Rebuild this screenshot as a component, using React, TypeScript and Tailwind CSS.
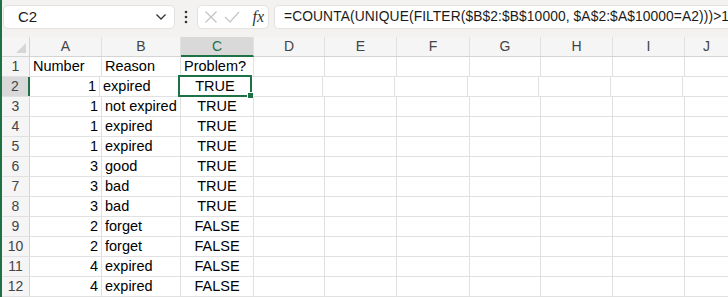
import React from "react";

const rows: [number, string, string][] = [
  [1, "expired", "TRUE"],
  [1, "not expired", "TRUE"],
  [1, "expired", "TRUE"],
  [1, "expired", "TRUE"],
  [3, "good", "TRUE"],
  [3, "bad", "TRUE"],
  [3, "bad", "TRUE"],
  [2, "forget", "FALSE"],
  [2, "forget", "FALSE"],
  [4, "expired", "FALSE"],
  [4, "expired", "FALSE"],
];

const cellFont = { fontFamily: '"Liberation Sans", Arial, sans-serif' };

function EmptyCells() {
  return (
    <>
      <div className="w-[71px] shrink-0 border-r border-[#e1e1e1]" />
      <div className="w-[72px] shrink-0 border-r border-[#e1e1e1]" />
      <div className="w-[73px] shrink-0 border-r border-[#e1e1e1]" />
      <div className="w-[71px] shrink-0 border-r border-[#e1e1e1]" />
      <div className="w-[72px] shrink-0 border-r border-[#e1e1e1]" />
      <div className="w-[72px] shrink-0 border-r border-[#e1e1e1]" />
      <div className="flex-1" />
    </>
  );
}

export default function App() {
  return (
    <div className="w-[728px] h-[297px] overflow-hidden flex bg-white" style={cellFont}>
      <div className="w-[2px] shrink-0 bg-[#1e7145]" />
      <div className="flex-1 flex flex-col min-w-0">
        {/* Formula bar */}
        <div className="h-[37px] shrink-0 bg-[#f3f2f1] flex items-start pt-[5px]">
          <div className="ml-[1px] w-[172px] h-[24px] bg-white border border-[#e3e2e1] rounded-[5px] flex items-center pl-[14px] pr-[6px]">
            <span className="text-[15px] text-[#1b1b1b] flex-1">C2</span>
            <svg width="12" height="8" viewBox="0 0 12 8" className="mr-[1px]">
              <path d="M1.5 1.5 L6 6 L10.5 1.5" fill="none" stroke="#333" strokeWidth="1.3" />
            </svg>
          </div>
          <div className="w-[22px] h-[24px] flex items-center justify-center">
            <svg width="4" height="14" viewBox="0 0 4 14">
              <circle cx="2" cy="2" r="1.3" fill="#333" />
              <circle cx="2" cy="7" r="1.3" fill="#333" />
              <circle cx="2" cy="12" r="1.3" fill="#333" />
            </svg>
          </div>
          <div className="w-[72px] h-[24px] bg-white border border-[#e3e2e1] rounded-[5px] flex items-center pl-[6px] pr-[4px]">
            <svg width="14" height="14" viewBox="0 0 14 14">
              <path d="M1.5 1.5 L12.5 12.5 M12.5 1.5 L1.5 12.5" stroke="#c3c3c3" strokeWidth="1.2" fill="none" />
            </svg>
            <svg width="16" height="14" viewBox="0 0 16 14" className="ml-[6px]">
              <path d="M1 7 L6 12 L15 2" stroke="#c3c3c3" strokeWidth="1.2" fill="none" />
            </svg>
            <span
              className="ml-auto text-[16px] italic text-[#333] leading-none"
              style={{ fontFamily: '"Liberation Serif", "Times New Roman", serif' }}
            >
              fx
            </span>
          </div>
          <div
            className="ml-[5px] flex-1 h-[24px] bg-white border border-r-0 border-[#e3e2e1] rounded-l-[5px] flex items-center pl-[9px] whitespace-nowrap overflow-hidden text-[13.8px] tracking-[0.1px] text-[#1b1b1b]"
          >
            =COUNTA(UNIQUE(FILTER($B$2:$B$10000, $A$2:$A$10000=A2)))&gt;1
          </div>
        </div>

        {/* Column header row */}
        <div className="h-[20px] shrink-0 flex bg-[#f5f5f5] border-b border-[#d4d4d4] text-[14px] text-[#444]">
          <div className="w-[28px] shrink-0 border-r border-[#d4d4d4] flex items-end justify-end pr-[3px] pb-[3px]">
            <svg width="10" height="10" viewBox="0 0 10 10">
              <path d="M10 0 L10 10 L0 10 Z" fill="#d6d6d6" />
            </svg>
          </div>
          <div className="w-[72px] shrink-0 border-r border-[#e1e1e1] flex items-center justify-center">A</div>
          <div className="w-[79px] shrink-0 border-r border-[#e1e1e1] flex items-center justify-center">B</div>
          <div className="w-[73px] shrink-0 border-r border-[#e1e1e1] flex items-center justify-center bg-[#d9d9d9] text-[#1e7145] border-b-2 border-b-[#1e7145] -mb-[1px]">C</div>
          <div className="w-[71px] shrink-0 border-r border-[#e1e1e1] flex items-center justify-center">D</div>
          <div className="w-[72px] shrink-0 border-r border-[#e1e1e1] flex items-center justify-center">E</div>
          <div className="w-[73px] shrink-0 border-r border-[#e1e1e1] flex items-center justify-center">F</div>
          <div className="w-[71px] shrink-0 border-r border-[#e1e1e1] flex items-center justify-center">G</div>
          <div className="w-[72px] shrink-0 border-r border-[#e1e1e1] flex items-center justify-center">H</div>
          <div className="w-[72px] shrink-0 border-r border-[#e1e1e1] flex items-center justify-center">I</div>
          <div className="flex-1 flex items-center justify-center">J</div>
        </div>

        {/* Row 1 */}
        <div className="h-[20px] shrink-0 flex border-b border-[#e1e1e1] text-[14.5px] text-black">
          <div className="w-[28px] shrink-0 bg-[#f5f5f5] border-r border-[#d4d4d4] flex items-center justify-center text-[14px] text-[#444]">1</div>
          <div className="w-[72px] shrink-0 border-r border-[#e1e1e1] flex items-center pl-[3px] pt-[1px]">Number</div>
          <div className="w-[79px] shrink-0 border-r border-[#e1e1e1] flex items-center pl-[3px] pt-[1px]">Reason</div>
          <div className="w-[73px] shrink-0 border-r border-[#e1e1e1] flex items-center pl-[3px] pt-[1px]">Problem?</div>
          <EmptyCells />
        </div>

        {rows.map(([n, reason, prob], i) => {
          const rowNum = i + 2;
          const selected = rowNum === 2;
          return (
            <div key={rowNum} className="h-[20px] shrink-0 flex border-b border-[#e1e1e1] text-[14.5px] text-black">
              <div
                className={
                  selected
                    ? "w-[28px] shrink-0 bg-[#d9d9d9] border-r-2 border-[#1e7145] flex items-center justify-center text-[14px] text-[#444] -mr-[1px]"
                    : "w-[28px] shrink-0 bg-[#f5f5f5] border-r border-[#d4d4d4] flex items-center justify-center text-[14px] text-[#444]"
                }
              >
                {rowNum}
              </div>
              <div className={selected ? "w-[71px] shrink-0 border-r border-[#e1e1e1] flex items-center justify-end pr-[3px] pt-[1px]" : "w-[72px] shrink-0 border-r border-[#e1e1e1] flex items-center justify-end pr-[3px] pt-[1px]"}>{n}</div>
              <div className="w-[79px] shrink-0 border-r border-[#e1e1e1] flex items-center pl-[3px] pt-[1px] whitespace-nowrap">{reason}</div>
              <div className="w-[73px] shrink-0 border-r border-[#e1e1e1] flex items-center justify-center pt-[1px] relative">
                {prob}
                {selected && (
                  <>
                    <div className="absolute -left-[1px] -top-[2px] right-[-1px] bottom-[-1px] border-2 border-[#1e7145] pointer-events-none" />
                    <div className="absolute right-[-3px] bottom-[-3px] w-[5px] h-[5px] bg-[#1e7145] border border-white box-content" />
                  </>
                )}
              </div>
              <EmptyCells />
            </div>
          );
        })}
      </div>
    </div>
  );
}
